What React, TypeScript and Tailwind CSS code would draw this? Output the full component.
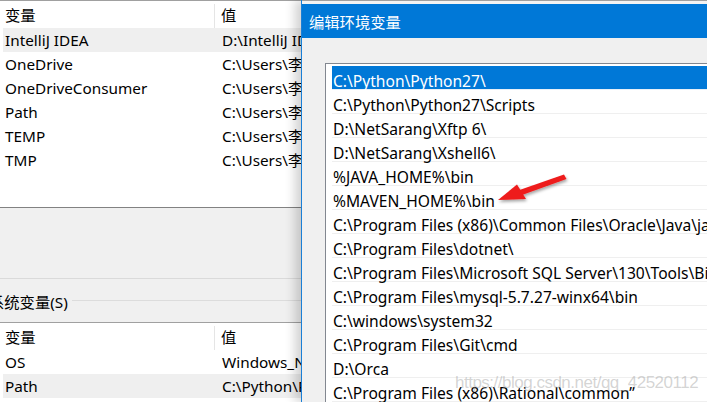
import React from "react";

const FONT = '"Noto Sans", "Noto Sans CJK SC", sans-serif';

const userVars: [string, string, boolean][] = [
  ["IntelliJ IDEA", "D:\\IntelliJ IDEA", true],
  ["OneDrive", "C:\\Users\\李", false],
  ["OneDriveConsumer", "C:\\Users\\李", false],
  ["Path", "C:\\Users\\李", false],
  ["TEMP", "C:\\Users\\李", false],
  ["TMP", "C:\\Users\\李", false],
];

const sysVars: [string, string, boolean][] = [
  ["OS", "Windows_NT", false],
  ["Path", "C:\\Python\\Python27", true],
];

const paths = [
  "C:\\Python\\Python27\\",
  "C:\\Python\\Python27\\Scripts",
  "D:\\NetSarang\\Xftp 6\\",
  "D:\\NetSarang\\Xshell6\\",
  "%JAVA_HOME%\\bin",
  "%MAVEN_HOME%\\bin",
  "C:\\Program Files (x86)\\Common Files\\Oracle\\Java\\javapath",
  "C:\\Program Files\\dotnet\\",
  "C:\\Program Files\\Microsoft SQL Server\\130\\Tools\\Binn\\",
  "C:\\Program Files\\mysql-5.7.27-winx64\\bin",
  "C:\\windows\\system32",
  "C:\\Program Files\\Git\\cmd",
  "D:\\Orca",
  "C:\\Program Files (x86)\\Rational\\common\u201d",
];

function VarTable({ rows }: { rows: [string, string, boolean][] }) {
  return (
    <div className="bg-white">
      <div className="flex h-[27px] items-center pt-[2px] text-[15.3px] text-black">
        <div className="w-[215px] shrink-0 pl-[5px] border-r border-[#e5e5e5] h-[24px] flex items-center">变量</div>
        <div className="pl-[6px] whitespace-nowrap">值</div>
      </div>
      {rows.map(([k, v, sel], i) => (
        <div key={i} className="pl-[3px]">
          <div
            className={`flex h-[24px] items-center text-[15.3px] text-black whitespace-nowrap ${sel ? "bg-[#efefef]" : ""}`}
          >
            <div className="w-[212px] shrink-0 pl-[2px]">{k}</div>
            <div className="pl-[7px] overflow-hidden">{v}</div>
          </div>
        </div>
      ))}
    </div>
  );
}

export default function App() {
  return (
    <div
      className="relative w-[707px] h-[402px] overflow-hidden bg-white"
      style={{ fontFamily: FONT }}
    >
      <div className="h-px bg-[#a0a0a0]" />
      <div className="flex h-[401px]">
        {/* Left: environment variables window behind */}
        <div className="w-[301px] shrink-0 flex flex-col overflow-hidden">
          <div className="h-[206px] bg-white">
            <VarTable rows={userVars} />
          </div>
          <div className="h-px bg-[#828282]" />
          <div className="h-[70px] bg-[#f0f0f0]" />
          <div className="h-px bg-[#dadada]" />
          <div className="h-[43px] bg-[#f0f0f0] flex items-center">
            <span className="ml-[-11px] text-[15.3px] text-black whitespace-nowrap pt-[4px]">系统变量(S)</span>
            <div className="ml-[4px] flex-1 h-px bg-[#dcdcdc]" />
          </div>
          <div className="h-px bg-[#a0a0a0]" />
          <div className="flex-1 bg-white">
            <VarTable rows={sysVars} />
          </div>
        </div>

        {/* Right: edit dialog */}
        <div className="flex-1 min-w-0 flex flex-col bg-[#f0f0f0] border-l border-[#1a7fd6] shadow-[-6px_0_10px_rgba(0,0,0,0.18)] z-10 -mt-px">
          <div className="h-[4px] bg-[#f3f3f3] border-t border-[#a0a0a0]" />
          <div className="h-[38px] bg-[#0078d7] flex items-center pl-[7px] pt-[4px] text-[15.3px] text-white">
            编辑环境变量
          </div>
          <div className="pt-[25px] pl-[23px]">
            <div className="border-t border-l border-[#828790] bg-white pt-[2px] pl-[6px]">
              {paths.map((p, i) => (
                <div
                  key={i}
                  className={`h-[24px] flex items-center pl-[1px] pt-[8px] text-[15.6px] whitespace-nowrap border-b ${
                    i === 0
                      ? "bg-[#0078d7] text-white border-[#e8f0f8]"
                      : "text-black border-[#efefef]"
                  }`}
                >
                  {p}
                </div>
              ))}
            </div>
          </div>
        </div>
      </div>

      {/* Red arrow annotation */}
      <svg
        className="absolute left-0 top-0 z-20 pointer-events-none"
        width="707"
        height="402"
        viewBox="0 0 707 402"
      >
        <defs>
          <filter id="sh" x="-20%" y="-20%" width="140%" height="140%">
            <feDropShadow dx="1" dy="2" stdDeviation="1.5" floodColor="#000" floodOpacity="0.35" />
          </filter>
        </defs>
        <g filter="url(#sh)" fill="#ee1c1c" stroke="none">
          <path d="M564 174.5 L566.5 179 L522 195 L519.5 190 Z" />
          <path d="M498 200 L517 184.5 L526 199 Z" />
        </g>
      </svg>

      {/* Watermark */}
      <div
        className="absolute z-20 left-[455px] top-[372px] text-[17px] leading-[22px] tracking-[-0.5px] text-[rgba(160,160,160,0.45)] whitespace-nowrap pointer-events-none"
        style={{ fontFamily: '"Liberation Sans", sans-serif' }}
      >
        https://blog.csdn.net/qq_42520112
      </div>
    </div>
  );
}
